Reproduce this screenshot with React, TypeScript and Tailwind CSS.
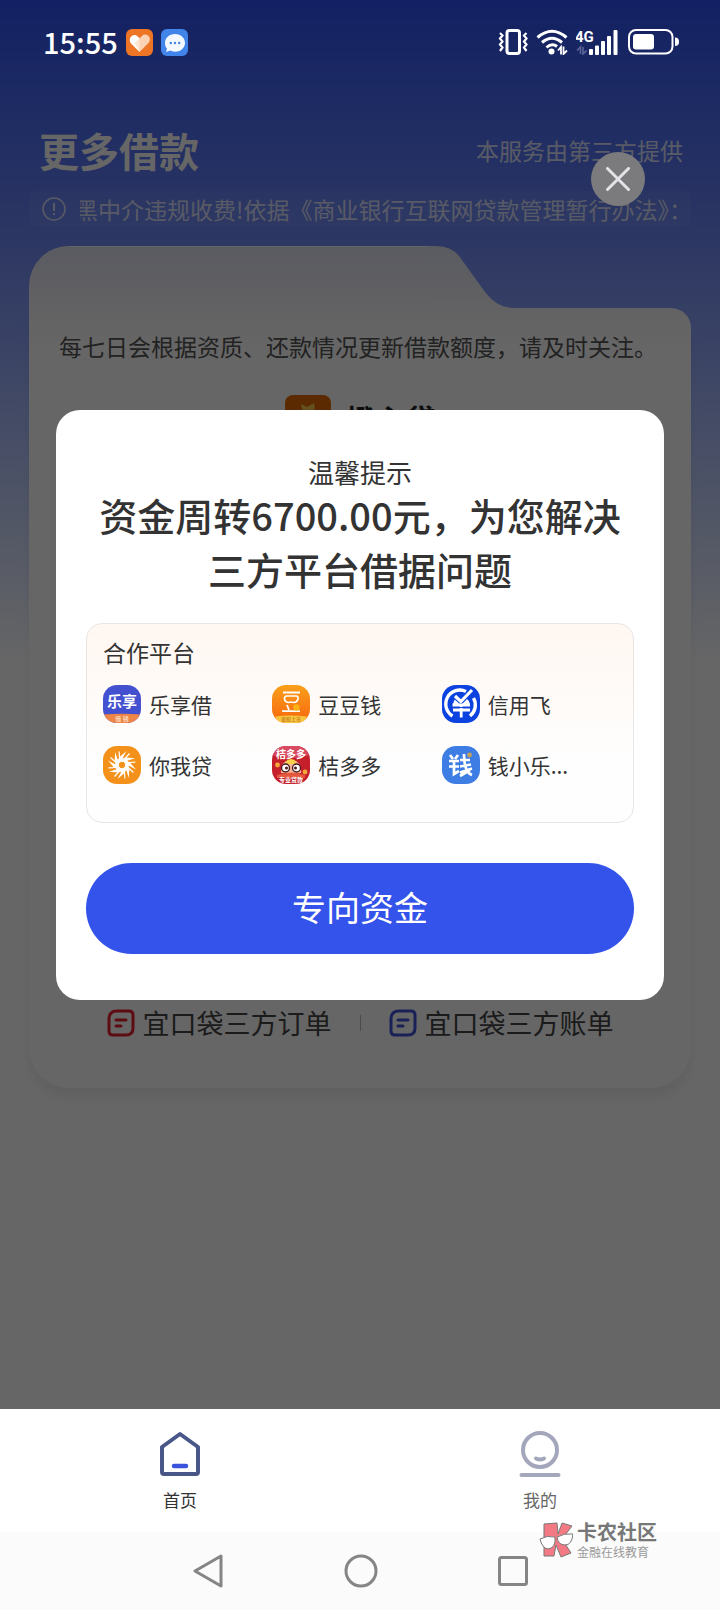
// App.tsx
import type { ReactNode } from 'react';

interface Platform {
  name: string;
  logo: ReactNode;
}

const LexiangLogo = () => (
  <svg viewBox="0 0 38 38" className="size-full">
    <rect width="38" height="38" fill="#4350cf" />
    <path d="M0 29.500 Q19 28 38 29.500 V38 H0 Z" fill="#ee8545" />
    <text x="19" y="22" textAnchor="middle" fontSize="15" fontWeight="700" fill="#fff">乐享</text>
    <text x="19" y="36" textAnchor="middle" fontSize="6" fontWeight="700" fill="#fbd9c0">借 钱</text>
  </svg>
);

const DoudouLogo = () => (
  <svg viewBox="0 0 38 38" className="size-full">
    <defs>
      <linearGradient id="doudou" x1="0" y1="0" x2="0" y2="1">
        <stop offset="0" stopColor="#f9a01a" />
        <stop offset="1" stopColor="#f7650e" />
      </linearGradient>
    </defs>
    <rect width="38" height="38" fill="url(#doudou)" />
    <path d="M11 7.500H28" stroke="#fff" strokeWidth="1.800" />
    <path d="M15 11H24Q26.500 11 26 14Q25 17.500 22 17.500Q19 16.500 16.500 17.500Q12.500 17 12.500 13.500Q12.500 11 15 11Z" fill="none" stroke="#fff" strokeWidth="1.700" />
    <path d="M15 20L17 25M10 26.200H28" stroke="#fff" strokeWidth="1.800" />
    <circle cx="24.500" cy="22.500" r="3.200" fill="#fbb216" />
    <path d="M3 31.500Q19 29.500 35 31.500L31 38H7Z" fill="#f9c53c" />
    <text x="19" y="36" textAnchor="middle" fontSize="5" fontWeight="700" fill="#c98a25">美股上市</text>
  </svg>
);

const XinyongLogo = () => (
  <svg viewBox="0 0 38 38" className="size-full">
    <rect width="38" height="38" fill="#0c43e0" />
    <path d="M10.500 31A14 14 0 0 1 24 6.500M31.500 13A14 14 0 0 1 28 31" fill="none" stroke="#fff" strokeWidth="3.400" />
    <path d="M11 19.500Q12 14 15 12L19 16L24 13Q27 15 28 19.500Z" fill="#fff" />
    <path d="M12 10L18.800 16.500L30 5" fill="none" stroke="#0c43e0" strokeWidth="5.500" />
    <path d="M13 11L18.800 16.500L30 5" fill="none" stroke="#fff" strokeWidth="3.200" />
    <path d="M10.500 20H28M11 25H28M19.200 19V32.500" fill="none" stroke="#fff" strokeWidth="2.800" />
    <path d="M10 22.500H28" stroke="#0c43e0" strokeWidth="1" />
  </svg>
);

const NiwoLogo = () => (
  <svg viewBox="0 0 38 38" className="size-full">
    <rect width="38" height="38" fill="#f4911b" />
    {[0, 45, 90, 135, 180, 225, 270, 315].map((angle) => (
      <g key={angle} transform={`rotate(${angle} 19 19)`}>
        <path d="M14.500 15.500L16.500 11L23.500 5L20 11.500V16Z" fill="#fff" />
        <path d="M21.500 13L26.500 7.500" stroke="#fff" strokeWidth="1.200" />
      </g>
    ))}
    <circle cx="19" cy="19" r="5.200" fill="none" stroke="#fff" strokeWidth="3" />
    <circle cx="19" cy="19" r="2.800" fill="#f4911b" />
  </svg>
);

const JuduoLogo = () => (
  <svg viewBox="0 0 38 38" className="size-full">
    <rect width="38" height="38" fill="#c41f2a" />
    <path d="M0 0H38V9Q19 15 0 9Z" fill="#d84a62" />
    <path d="M9 27Q8 15 19 14Q30 15 29 27Z" fill="#f5b69a" />
    <path d="M13 16Q19 10 25 16L22 18H16Z" fill="#fbd04a" />
    <circle cx="5.500" cy="19" r="2.400" fill="#f6a93a" />
    <circle cx="33" cy="26" r="2.400" fill="#f6a93a" />
    <circle cx="13.500" cy="22" r="4" fill="#fff" stroke="#4c1a1a" strokeWidth="1.400" />
    <circle cx="24.500" cy="22" r="4" fill="#fff" stroke="#4c1a1a" strokeWidth="1.400" />
    <circle cx="14.500" cy="22" r="1.500" fill="#4c1a1a" />
    <circle cx="23.500" cy="22" r="1.500" fill="#4c1a1a" />
    <path d="M5 29Q19 24 33 29V32H5Z" fill="#e4573d" />
    <text x="19" y="12" textAnchor="middle" fontSize="10" fontWeight="700" fill="#fff">桔多多</text>
    <text x="19" y="36" textAnchor="middle" fontSize="6" fontWeight="700" fill="#fff">专业贷款</text>
  </svg>
);

const QianxiaoLogo = () => (
  <svg viewBox="0 0 38 38" className="size-full">
    <rect width="38" height="38" fill="#3d7de4" />
    <g fill="none" stroke="#fff" strokeWidth="2.700">
      <path d="M8 9L11 13M16 9L13 13M7 15H17M7 20.500H17M12 15V28L17 25" />
      <path d="M18 14H28M18 20.500L29 18.500M18 26.500L30 22.500M22 8C22 18 24 27 30 29M28 24L18 30" />
    </g>
    <circle cx="27.500" cy="9" r="2.400" fill="#c3a15b" />
  </svg>
);

const platforms: Platform[] = [
  { name: '乐享借', logo: <LexiangLogo /> },
  { name: '豆豆钱', logo: <DoudouLogo /> },
  { name: '信用飞', logo: <XinyongLogo /> },
  { name: '你我贷', logo: <NiwoLogo /> },
  { name: '桔多多', logo: <JuduoLogo /> },
  { name: '钱小乐...', logo: <QianxiaoLogo /> },
];

function StatusBar() {
  return (
    <div className="absolute inset-x-0 top-0 z-20 flex h-[84px] items-center justify-between pr-[41px] pl-[43px] text-white">
      <div className="flex items-center gap-2">
        <span className="pb-[2px] text-[29px] leading-8 font-medium">15:55</span>
        <svg viewBox="0 0 27 27" className="size-[27px]">
          <rect width="27" height="27" rx="6" fill="#ee7426" />
          <path d="M13.500 23L5 14.500C1.500 10 6 4.500 10.500 6.500L13.500 9Z" fill="#fff" />
          <path d="M13.500 23L22 14.500C26.500 10 22 4 17 6L8.500 14Z" fill="#fde3cd" fillOpacity=".85" />
        </svg>
        <svg viewBox="0 0 27 27" className="size-[27px]">
          <rect width="27" height="27" rx="6" fill="#4285ea" />
          <path d="M14 5C8 5 4 9 4 14C4 17 5 18.500 6 19.500L5 23L9.500 21.500C17 25 24 20 24 14C24 9 20 5 14 5Z" fill="#f4f9ff" />
          <g fill="#4285ea">
            <circle cx="9.800" cy="14" r="1.200" />
            <circle cx="14" cy="14" r="1.200" />
            <circle cx="18.200" cy="14" r="1.200" />
          </g>
        </svg>
      </div>
      <div className="flex items-center gap-2">
        <svg viewBox="0 0 30 26" className="h-[26px] w-[30px]" fill="none" stroke="#fff">
          <rect x="9" y="1.500" width="12.500" height="23" rx="2.500" strokeWidth="3" />
          <path d="M2 4L4.500 6.500L2 9.500L4.500 12.500L2 15.500L4.500 18.500L2 22M28.500 4L26 6.500L28.500 9.500L26 12.500L28.500 15.500L26 18.500L28.500 22" strokeWidth="2.200" />
        </svg>
        <svg viewBox="0 0 32 26" className="h-[26px] w-8" fill="none" stroke="#fff" strokeWidth="3">
          <path d="M1.500 8.500Q16 -4 30.500 8.500M6 13.500Q16 5 26 13.500M10.500 18.500Q16 13.500 21 17.500" />
          <circle cx="15.500" cy="22.500" r="3" fill="#fff" stroke="none" />
          <path d="M22 21.500L25 18V25.500M27.500 17.500V25L31 21.500" strokeWidth="1.800" />
        </svg>
        <svg viewBox="0 0 42 26" className="h-[26px] w-[42px]" fill="#fff">
          <text x="-1" y="13" fontSize="15" fontWeight="700" fontFamily="Roboto">4G</text>
          <path d="M1 21.500L4.500 18V25M7 18V25L10.500 21.500" fill="none" stroke="#5d669c" strokeWidth="1.600" />
          <rect x="13" y="20" width="4" height="6" rx="1" />
          <rect x="19" y="16.500" width="4" height="9.500" rx="1" />
          <rect x="25" y="12" width="4" height="14" rx="1" />
          <rect x="31" y="7" width="4" height="19" rx="1" />
          <rect x="37.500" y="1" width="4" height="25" rx="1" />
        </svg>
        <svg viewBox="0 0 51 26" className="ml-[2px] h-[26px] w-[51px]" fill="#fff">
          <rect x="1" y="1" width="43.500" height="23.500" rx="7" fill="none" stroke="#fff" strokeWidth="2" />
          <rect x="5" y="5" width="21" height="15.500" rx="3" />
          <path d="M47 8.500Q51 8.500 51 12.700Q51 17 47 17Z" />
        </svg>
      </div>
    </div>
  );
}

function OrderIcon({ color }: { color: string }) {
  return (
    <svg viewBox="0 0 28 28" className="size-7" fill="none" stroke={color} strokeWidth="3" strokeLinecap="round">
      <path d="M10 2H22Q26 2 26 6V19Q26 26 19 26H6Q2 26 2 22V10Q2 2 10 2Z" />
      <path d="M9 11H19M9 17H14" />
    </svg>
  );
}

// Folder shaped card: raised tab on the left, sloping down to the body
function LoanCard() {
  return (
    <section className="mx-[29px] mt-[19px]">
      <div className="flex h-[62px] pr-[182px]">
        <div className="flex-1 rounded-tl-[40px] border-t border-white/40 bg-linear-to-b from-[#e2e4f2] to-[#f4f4f9]" />
        <svg viewBox="0 0 90 62" className="-mr-[10px] h-[62px] w-[90px]">
          <defs>
            <linearGradient id="slope" x1="0" y1="0" x2="0" y2="1">
              <stop offset="0" stopColor="#e2e4f2" />
              <stop offset="1" stopColor="#f4f4f9" />
            </linearGradient>
          </defs>
          <path d="M0 0H8Q24 0 33 14L56 46Q68 62 84 62H0Z" fill="url(#slope)" />
        </svg>
      </div>
      <div className="flex flex-col rounded-tr-[20px] rounded-b-[40px] bg-white bg-linear-to-b from-[#f5f5fa] to-white to-5% pt-[22px] shadow-[0_10px_10px_rgba(0,0,0,0.06)]">
        <p className="pl-[30px] text-[23px] leading-8 whitespace-nowrap text-[#555]">
          每七日会根据资质、还款情况更新借款额度，请及时关注。
        </p>
        <div className="mt-[33px] flex h-[46px] items-center justify-center gap-[15px]">
          <svg viewBox="0 0 46 46" className="size-[46px]">
            <rect width="46" height="46" rx="8" fill="#e66a00" />
            <path d="M16 9L22 12L29 8L30 14L24 17L17 14Z" fill="#f8c84c" />
            <circle cx="23" cy="28" r="10" fill="#fff" />
          </svg>
          <h2 className="text-[30px] font-bold text-[#222]">橙心贷</h2>
        </div>
        <div className="mt-[564px] flex items-center justify-center pb-[47px] text-[27px] leading-9 text-[#444]">
          <a href="#orders" className="flex items-center gap-2">
            <OrderIcon color="#e8202e" />
            宜口袋三方订单
          </a>
          <span className="mx-7 h-4 w-px bg-[#bbb]" />
          <a href="#bills" className="flex items-center gap-2">
            <OrderIcon color="#4353d8" />
            宜口袋三方账单
          </a>
        </div>
      </div>
    </section>
  );
}

function TipDialog() {
  return (
    <div className="absolute inset-0 z-10 flex items-center bg-black/60 px-14">
      <button aria-label="关闭" className="absolute top-[152px] right-[75px] flex size-[54px] items-center justify-center rounded-full bg-[#7b7b7e]">
        <svg viewBox="0 0 24 24" className="size-6" stroke="#e4e4e8" strokeWidth="3" strokeLinecap="round">
          <path d="M1.500 1.500L22.500 22.500M22.500 1.500L1.500 22.500" />
        </svg>
      </button>
      <div role="dialog" aria-labelledby="tip-title" className="w-full rounded-3xl bg-white px-[30px] py-[46px] text-[#333]">
        <p className="text-center text-[26px] leading-8">温馨提示</p>
        <h1 id="tip-title" className="text-center text-[38px] leading-[54px] font-medium">
          资金周转6700.00元，为您解决
          <br />
          三方平台借据问题
        </h1>
        <div className="mt-[27px] h-[200px] rounded-2xl border border-[#e9e6e4] bg-linear-to-b from-[#fff7f1] to-[#fefefe] to-70% pt-3 pr-[22px] pl-4">
          <h2 className="text-[23px] leading-8">合作平台</h2>
          <ul className="mt-[17px] grid grid-cols-3 gap-y-[23px]">
            {platforms.map((platform) => (
              <li key={platform.name} className="flex items-center gap-2">
                <span className="size-[38px] overflow-hidden rounded-[14px]">{platform.logo}</span>
                <span className="text-[21px] leading-[38px] whitespace-nowrap">{platform.name}</span>
              </li>
            ))}
          </ul>
        </div>
        <button className="mt-10 h-[91px] w-full rounded-full bg-[#3453ea] pb-1 text-[34px] text-white">
          专向资金
        </button>
      </div>
    </div>
  );
}

function TabBar() {
  return (
    <nav className="grid h-[123px] grid-cols-2 bg-white text-[17px] leading-6">
      <a href="#home" className="flex flex-col items-center gap-[11px] pt-[22px] text-[#333]">
        <svg viewBox="0 0 42 46" className="h-[46px] w-[42px]" fill="none" strokeLinejoin="round" strokeLinecap="round">
          <path d="M21 3L39 16V41Q39 43 37 43H5Q3 43 3 41V16Z" stroke="#485688" strokeWidth="4" />
          <path d="M15 35H27" stroke="#3b52de" strokeWidth="4.500" />
        </svg>
        首页
      </a>
      <a href="#mine" className="flex flex-col items-center gap-[11px] pt-[22px] text-[#666]">
        <svg viewBox="0 0 42 46" className="h-[46px] w-[42px]" fill="none" stroke="#a4a7bb" strokeWidth="4" strokeLinecap="round">
          <circle cx="21" cy="19" r="17" />
          <path d="M17 27.500Q21 29.500 25 27.500M2.500 44H39.500" />
        </svg>
        我的
      </a>
    </nav>
  );
}

function SystemNav() {
  return (
    <div className="relative flex h-[78px] items-center justify-center gap-[120px] bg-[#fbfbfb]">
      <button aria-label="返回">
        <svg viewBox="0 0 32 34" className="h-[34px] w-8" fill="none" stroke="#858585" strokeWidth="3" strokeLinejoin="round">
          <path d="M29 2L3 17L29 32Z" />
        </svg>
      </button>
      <button aria-label="主页">
        <svg viewBox="0 0 34 34" className="size-[34px]" fill="none" stroke="#858585" strokeWidth="3">
          <circle cx="17" cy="17" r="15" />
        </svg>
      </button>
      <button aria-label="最近任务">
        <svg viewBox="0 0 30 30" className="size-[30px]" fill="none" stroke="#858585" strokeWidth="3">
          <rect x="1.500" y="1.500" width="27" height="27" rx="2" />
        </svg>
      </button>
      {/* Community watermark */}
      <div className="absolute -top-[12px] right-[63px] flex items-center gap-1">
        <svg viewBox="0 0 34 36" className="h-9 w-[34px]" stroke="#777" strokeWidth="1">
          <path d="M5 2L18 1L19 12L23 1L33 4L23 17L32 31L22 35L17 23L15 34H5Z" fill="#f37a84" />
          <path d="M1 17Q8 13 16 15Q17 26 9 27Q3 26 1 17ZM18 15Q25 11 34 12Q33 23 26 23Q19 23 18 15Z" fill="#fff" />
        </svg>
        <div className="flex flex-col">
          <span className="text-[20px] leading-6 font-bold text-[#777]">卡农社区</span>
          <span className="text-[12px] leading-4 text-[#999]">金融在线教育</span>
        </div>
      </div>
    </div>
  );
}

export default function App() {
  return (
    <div className="flex min-h-screen flex-col bg-white font-['Noto_Sans_CJK_SC',sans-serif]">
      <main className="relative flex-1 bg-linear-to-b from-[#3050f7] via-[#7089f7] via-17% to-white to-47% pt-[127px]">
        <StatusBar />
        <header className="flex items-center justify-between pr-[37px] pl-[39px] text-white">
          <h1 className="text-[40px] leading-[46px] font-bold">更多借款</h1>
          <p className="text-[23px] leading-8 text-white/80">本服务由第三方提供</p>
        </header>
        <div className="mx-[29px] mt-[18px] flex items-center gap-[14px] rounded-lg bg-white/5 px-[13px] text-white/75">
          <svg viewBox="0 0 24 24" className="size-6 shrink-0" fill="none" stroke="currentColor" strokeWidth="1.500">
            <circle cx="12" cy="12" r="11" />
            <path d="M12 6V14M12 16V18" strokeWidth="2" />
          </svg>
          {/* Scrolling notice, clipped at both ends */}
          <p className="-indent-[5px] overflow-hidden text-[23px] leading-9 whitespace-nowrap">
            黑中介违规收费!依据《商业银行互联网贷款管理暂行办法》：
          </p>
        </div>
        <LoanCard />
        <TipDialog />
      </main>
      <TabBar />
      <SystemNav />
    </div>
  );
}
